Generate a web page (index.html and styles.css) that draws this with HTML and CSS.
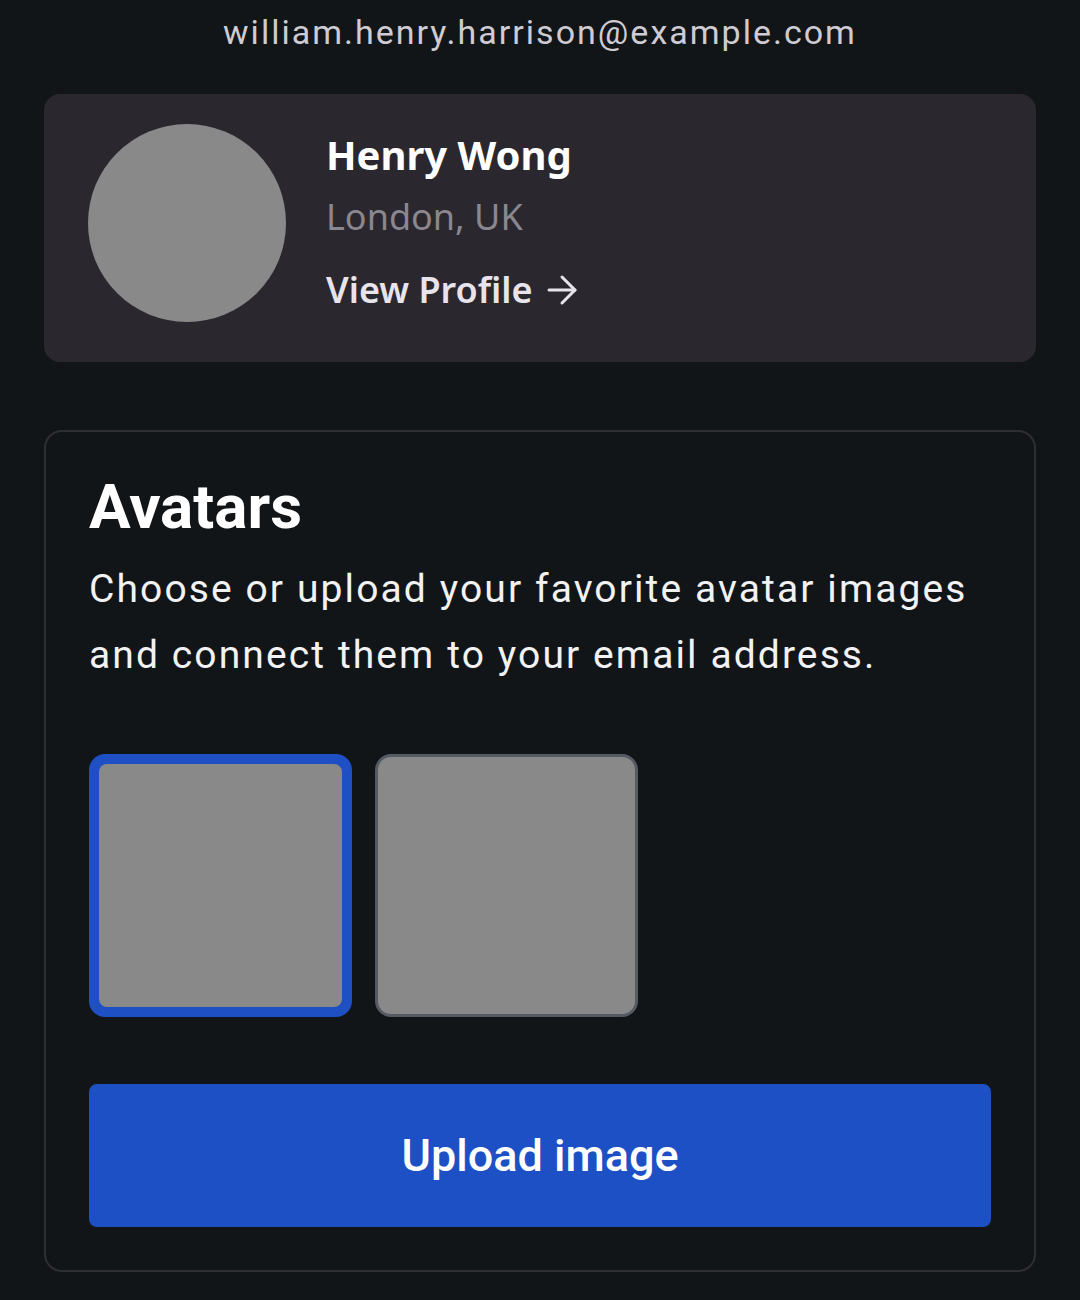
FILE: index.html
```html
<!DOCTYPE html>
<html lang="en">
<head>
    <meta charset="UTF-8">
    <title>Account</title>
    <link rel="stylesheet" href="styles.css">
</head>
<body>
<div class="page">
    <p class="email">william.henry.harrison@example.com</p>

    <div class="profile">
        <div class="profile-pic"></div>
        <div class="profile-info">
            <h2 class="profile-name">Henry Wong</h2>
            <p class="profile-place">London, UK</p>
            <a href="javascript:;" class="profile-link">View Profile
                <svg width="32" height="32" viewBox="0 0 32 32" fill="none" stroke="currentColor" stroke-width="3" stroke-linecap="round" stroke-linejoin="round"><path d="M3 16h26"/><path d="M16 3l13 13-13 13"/></svg>
            </a>
        </div>
    </div>

    <div class="avatars">
        <h1 class="avatars-title">Avatars</h1>
        <p class="avatars-desc">Choose or upload your favorite avatar images and connect them to your email address.</p>
        <ul class="avatar-list">
            <li class="avatar-item selected"><span></span></li>
            <li class="avatar-item"><span></span></li>
        </ul>
        <a href="javascript:;" class="upload-btn">Upload image</a>
    </div>
</div>
</body>
</html>
```

FILE: styles.css
```css
* {
    margin: 0;
    padding: 0;
    box-sizing: border-box;
}

ul, ol {
    list-style: none;
}

a {
    text-decoration: none;
}

body {
    background-color: #111518;
    font-family: Roboto, "Liberation Sans", sans-serif;
    color: #fff;
}

.page {
    padding: 10px 44px 0;
}

.email {
    text-align: center;
    font-size: 34px;
    line-height: 44px;
    letter-spacing: 2px;
    color: #cfcbd3;
}

.profile {
    display: flex;
    align-items: flex-start;
    gap: 40px;
    margin-top: 40px;
    padding: 30px 44px 34px;
    background-color: #2a282e;
    border-radius: 16px;
}

.profile-pic {
    width: 198px;
    height: 198px;
    border-radius: 50%;
    background-color: #898989;
    flex-shrink: 0;
}

.profile-info {
    display: flex;
    flex-direction: column;
    font-family: "Noto Sans", "Open Sans", sans-serif;
    margin-top: 4px;
}

.profile-name {
    font-size: 40px;
    font-weight: 700;
    line-height: 54px;
    color: #fff;
}

.profile-place {
    font-size: 36px;
    line-height: 70px;
    color: #8a8790;
}

.profile-link {
    display: flex;
    align-items: center;
    gap: 13px;
    font-size: 36px;
    font-weight: 600;
    line-height: 76px;
    color: #e8e4ec;
}

.avatars {
    margin-top: 68px;
    padding: 43px 43px 43px;
    border: 2px solid #2f2f32;
    border-radius: 18px;
}

.avatars-title {
    font-size: 62px;
    font-weight: 700;
    line-height: 64px;
}

.avatars-desc {
    margin-top: 17px;
    font-size: 39px;
    line-height: 66px;
    letter-spacing: 2.1px;
    color: #f2f2f4;
}

.avatar-list {
    display: flex;
    gap: 23px;
    margin-top: 66px;
}

.avatar-item {
    width: 263px;
    height: 263px;
    border: 3px solid #555b63;
    border-radius: 16px;
    background-color: #898989;
    overflow: hidden;
}

.avatar-item.selected {
    background-color: #1e50c4;
    border: none;
    padding: 10px;
}

.avatar-item span {
    display: block;
    width: 100%;
    height: 100%;
}

.avatar-item.selected span {
    background-color: #898989;
    border-radius: 8px;
}

.upload-btn {
    display: flex;
    align-items: center;
    justify-content: center;
    height: 143px;
    margin-top: 67px;
    background-color: #1e50c5;
    border-radius: 8px;
    color: #fff;
    font-size: 45px;
    font-weight: 500;
}
```
